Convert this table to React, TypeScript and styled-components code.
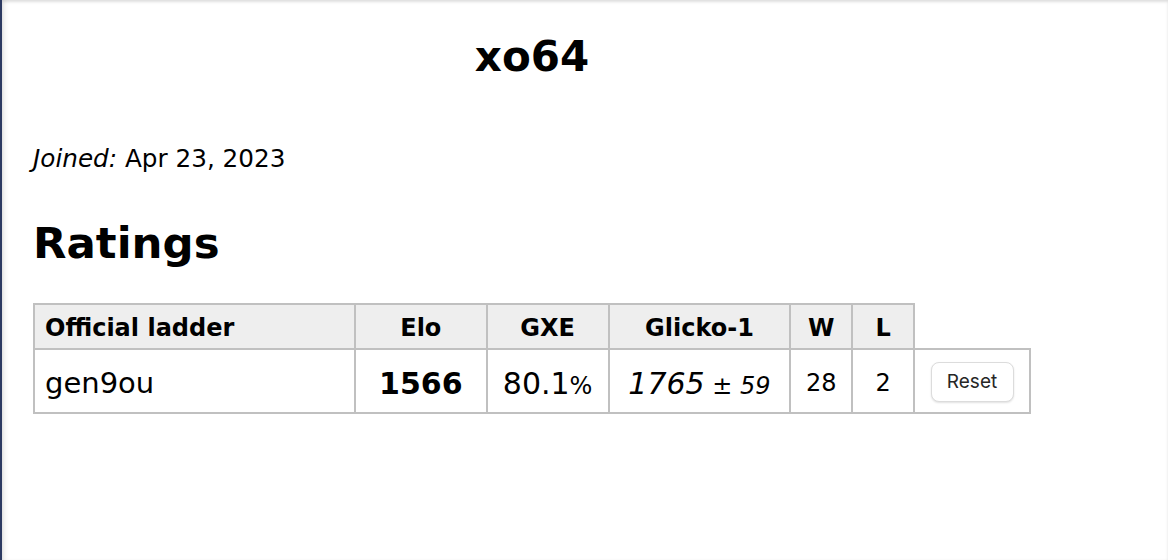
import React from "react";
import styled, { createGlobalStyle } from "styled-components";

const GlobalStyle = createGlobalStyle`
  html, body {
    margin: 0;
    padding: 0;
    background: #ffffff;
  }
  body {
    font-family: "DejaVu Sans", Verdana, sans-serif;
    color: #000;
  }
`;

const Page = styled.div`
  box-sizing: border-box;
  min-height: 560px;
  border-left: 2px solid #2c3a62;
  box-shadow: inset 0 2px 3px rgba(0, 0, 0, 0.12), inset 5px 0 5px -2px rgba(0, 0, 0, 0.08);
  padding: 0 0 0 31px;
  overflow: hidden;
`;

const Content = styled.div`
  width: 998px;
`;

const Title = styled.h1`
  margin: 32px 0 0;
  font-size: 42px;
  line-height: 50px;
  font-weight: bold;
  text-align: center;
`;

const Joined = styled.p`
  margin: 63px 0 0;
  font-size: 24.7px;
  line-height: 28px;
`;

const Label = styled.em`
  font-style: italic;
`;

const Heading = styled.h2`
  margin: 45px 0 0;
  font-size: 43.5px;
  line-height: 50px;
  font-weight: bold;
`;

const Table = styled.table`
  margin-top: 35px;
  border-collapse: collapse;
  table-layout: fixed;
`;

const Col = styled.col<{ $w: number }>`
  width: ${(p) => p.$w}px;
`;

const Th = styled.th<{ $left?: boolean }>`
  background: #eeeeee;
  border: 2px solid #c0c0c0;
  font-size: 24px;
  font-weight: bold;
  height: 41px;
  padding: 2px 10px 0;
  text-align: ${(p) => (p.$left ? "left" : "center")};
  vertical-align: middle;
  white-space: nowrap;
`;

const Td = styled.td<{ $left?: boolean; $size?: number }>`
  border: 2px solid #c0c0c0;
  font-size: ${(p) => p.$size ?? 30}px;
  height: 58px;
  padding: 4px 10px 0;
  text-align: ${(p) => (p.$left ? "left" : "center")};
  vertical-align: middle;
  white-space: nowrap;
`;

const ButtonCell = styled.td`
  border: 2px solid #c0c0c0;
  padding: 1px 10px 0;
  text-align: center;
  vertical-align: middle;
`;

const Strong = styled.strong`
  font-weight: bold;
`;

const Small = styled.small`
  font-size: 24px;
`;

const Ital = styled.em`
  font-style: italic;
`;

const ResetButton = styled.button`
  font-family: Inter, "Noto Sans", sans-serif;
  font-size: 19px;
  color: #262626;
  background: #ffffff;
  border: 1px solid #dcdcdc;
  border-radius: 8px;
  box-shadow: 0 1px 2px rgba(0, 0, 0, 0.12);
  width: 83px;
  height: 40px;
  padding: 0;
  cursor: pointer;
`;

export default function App() {
  return (
    <>
      <GlobalStyle />
      <Page>
        <Content>
          <Title>xo64</Title>
          <Joined>
            <Label>Joined:</Label> Apr 23, 2023
          </Joined>
          <Heading>Ratings</Heading>
          <Table>
            <colgroup>
              <Col $w={322} />
              <Col $w={132} />
              <Col $w={122} />
              <Col $w={182} />
              <Col $w={62} />
              <Col $w={62} />
              <Col $w={116} />
            </colgroup>
            <thead>
              <tr>
                <Th $left>Official ladder</Th>
                <Th>Elo</Th>
                <Th>GXE</Th>
                <Th>Glicko-1</Th>
                <Th>W</Th>
                <Th>L</Th>
              </tr>
            </thead>
            <tbody>
              <tr>
                <Td $left $size={29}>gen9ou</Td>
                <Td>
                  <Strong>1566</Strong>
                </Td>
                <Td>
                  80.1<Small>%</Small>
                </Td>
                <Td>
                  <Ital>1765</Ital>
                  <Small>
                    {" "}± <Ital>59</Ital>
                  </Small>
                </Td>
                <Td $size={24}>28</Td>
                <Td $size={24}>2</Td>
                <ButtonCell>
                  <ResetButton>Reset</ResetButton>
                </ButtonCell>
              </tr>
            </tbody>
          </Table>
        </Content>
      </Page>
    </>
  );
}
